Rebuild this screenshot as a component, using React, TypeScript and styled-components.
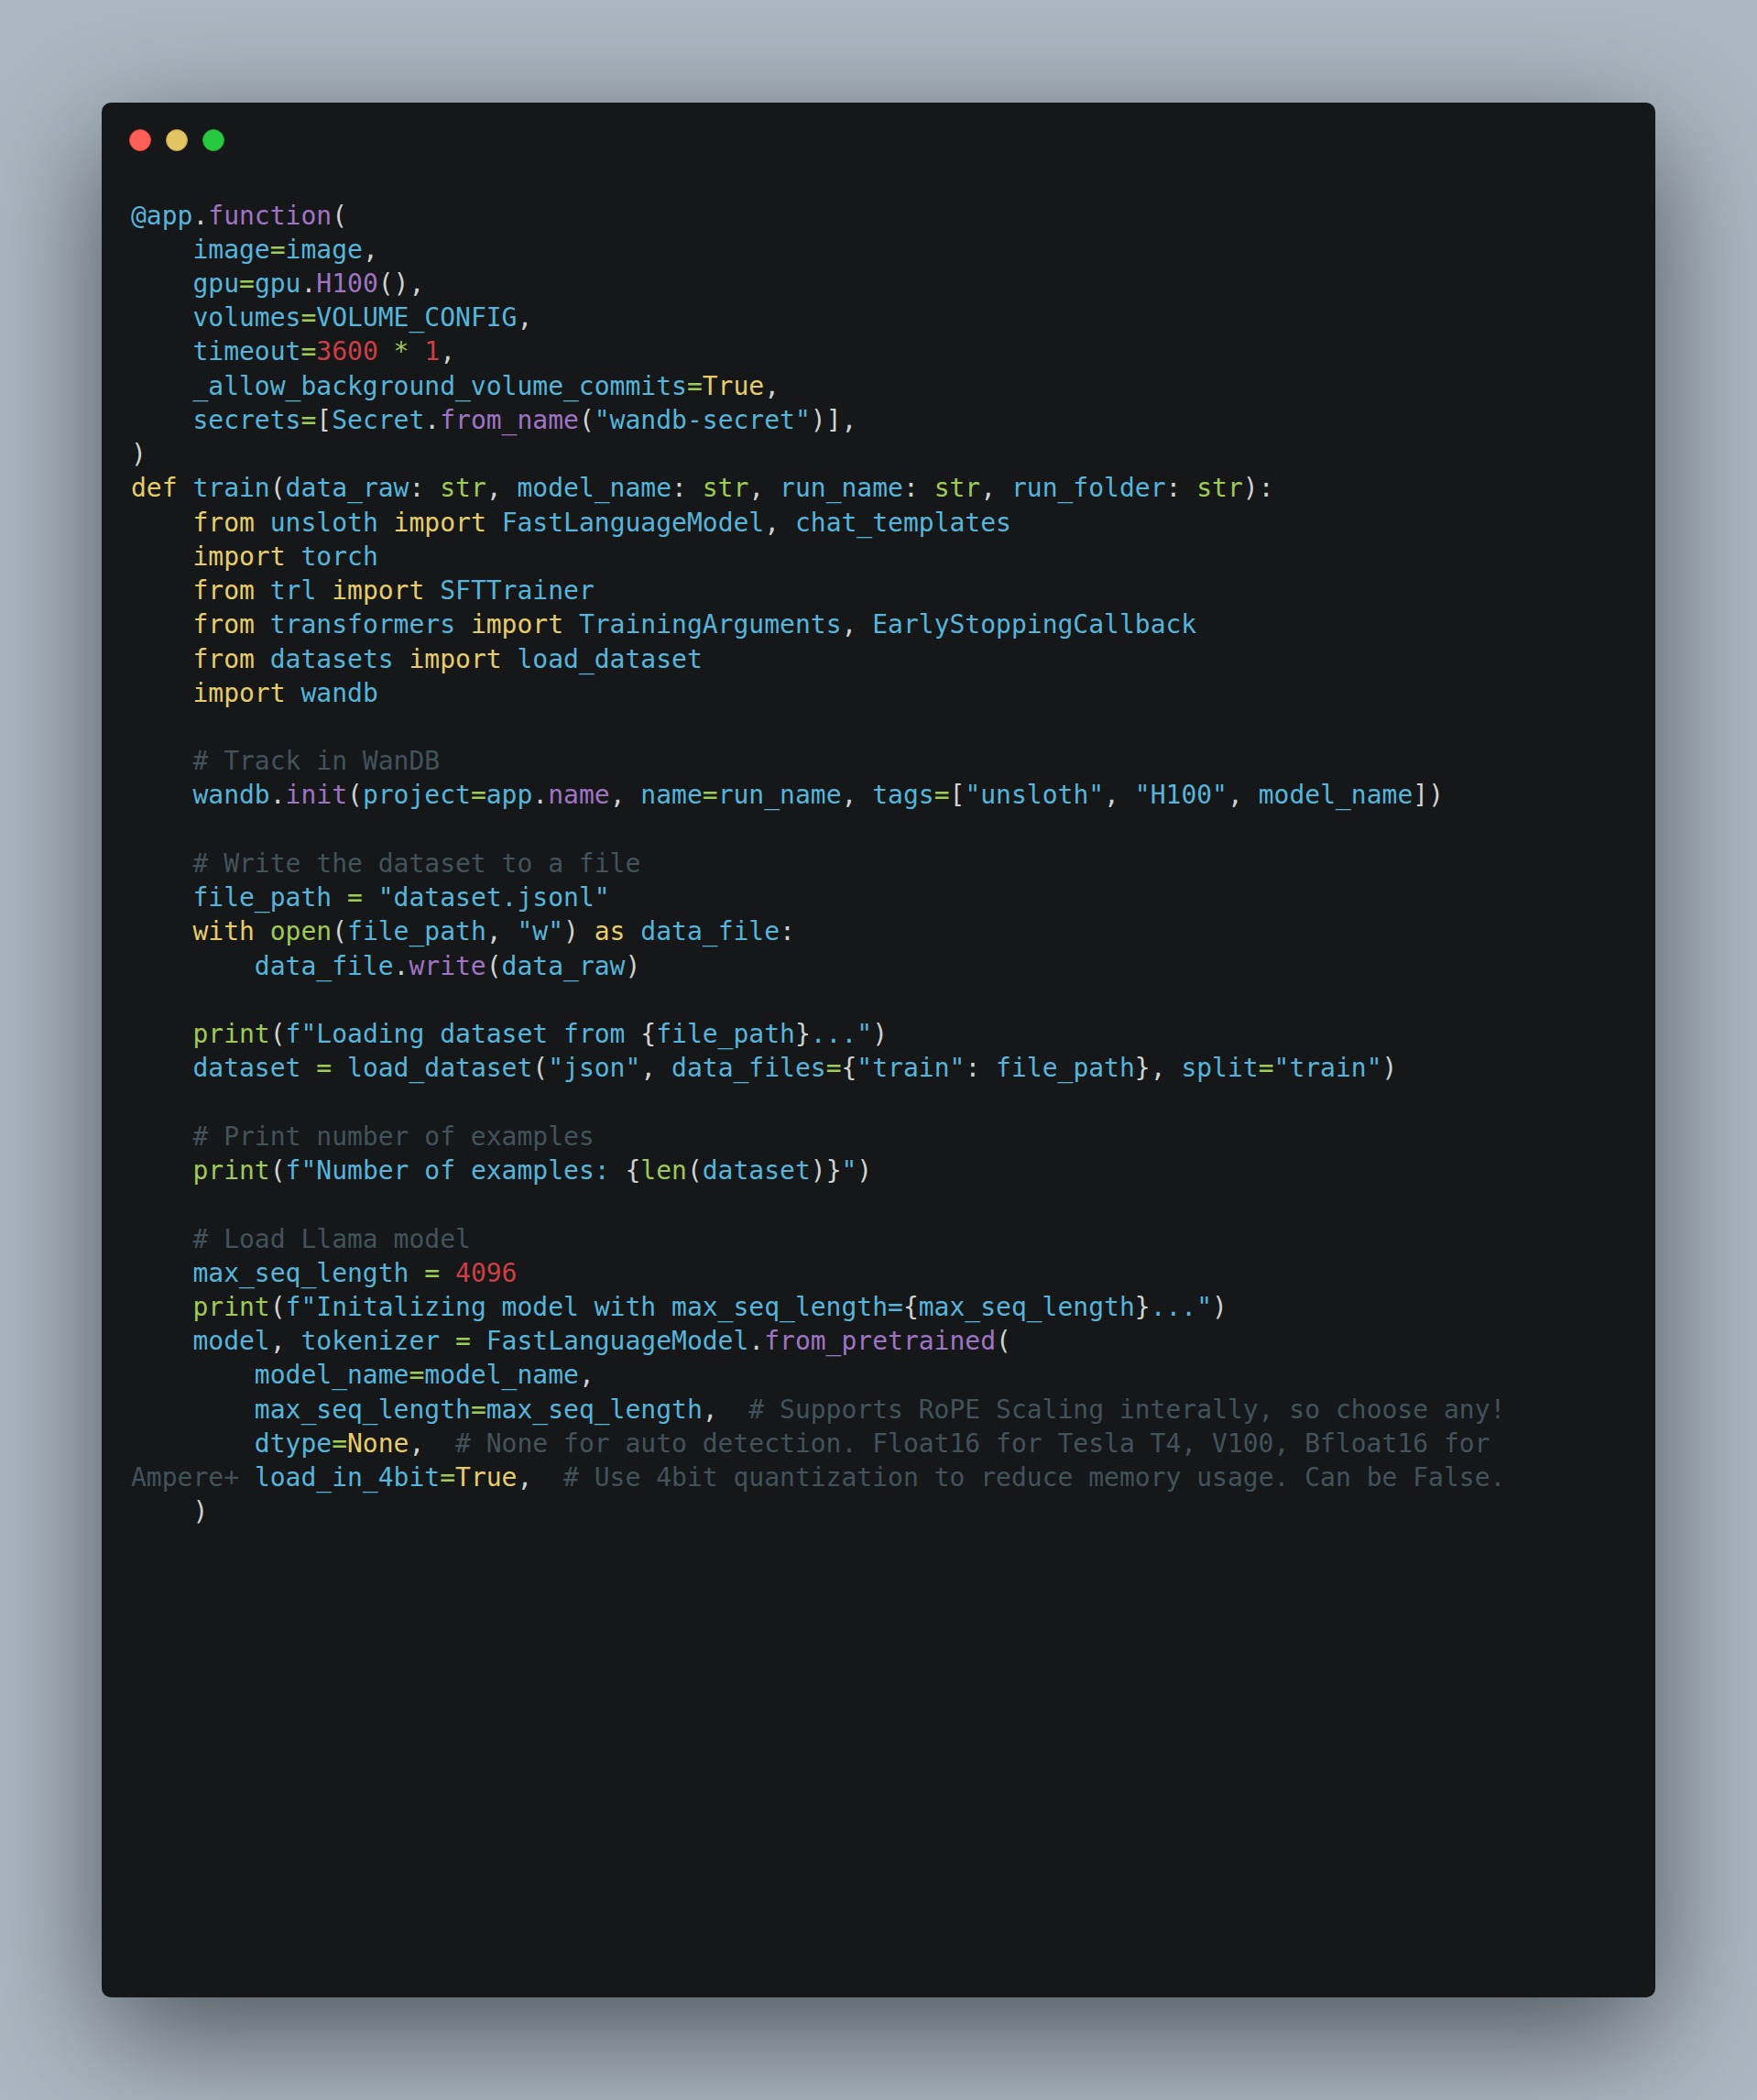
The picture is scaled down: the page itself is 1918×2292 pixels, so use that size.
import React from "react";
import styled, { createGlobalStyle } from "styled-components";

const GlobalStyle = createGlobalStyle`
  html, body {
    margin: 0;
    padding: 0;
    background: #abb8c3;
  }
  #root {
    width: 1918px;
    height: 2292px;
  }
`;

type Kind = "t" | "v" | "p" | "k" | "o" | "n" | "c";
type Tok = [Kind, string];

const colors: Record<Kind, string> = {
  t: "#cfd2d1",
  v: "#55b5db",
  p: "#a074c4",
  k: "#e6cd69",
  o: "#9fca56",
  n: "#cd3f45",
  c: "#41535b",
};

const Frame = styled.div`
  box-sizing: border-box;
  width: 1918px;
  height: 2292px;
  padding: 112px 111px;
  background: #abb8c3;
`;

const Window = styled.div`
  box-sizing: border-box;
  height: 2068px;
  background: #151718;
  border-radius: 10px;
  box-shadow: 0 40px 136px rgba(0, 0, 0, 0.55);
  padding: 29px 32px 32px 30px;
  display: flex;
  flex-direction: column;
`;

const Controls = styled.div`
  display: flex;
  gap: 16px;
  height: 24px;
`;

const Dot = styled.span<{ $fill: string; $stroke: string }>`
  box-sizing: border-box;
  width: 24px;
  height: 24px;
  border-radius: 50%;
  background: ${(p) => p.$fill};
  border: 1px solid ${(p) => p.$stroke};
`;

const Code = styled.pre`
  margin: 51.5px 0 0 2px;
  font-family: "DejaVu Sans Mono", "Liberation Mono", monospace;
  font-size: 28px;
  line-height: 37.24px;
  color: #cfd2d1;
  white-space: pre;
`;

const Line = styled.div`
  height: 37.24px;
`;

const Span = styled.span<{ $k: Kind }>`
  color: ${(p) => colors[p.$k]};
`;

const L = (...toks: Tok[]): Tok[] => toks;

const lines: Tok[][] = [
  L(["v", "@app"], ["t", "."], ["p", "function"], ["t", "("]),
  L(["t", "    "], ["v", "image"], ["o", "="], ["v", "image"], ["t", ","]),
  L(["t", "    "], ["v", "gpu"], ["o", "="], ["v", "gpu"], ["t", "."], ["p", "H100"], ["t", "(),"]),
  L(["t", "    "], ["v", "volumes"], ["o", "="], ["v", "VOLUME_CONFIG"], ["t", ","]),
  L(["t", "    "], ["v", "timeout"], ["o", "="], ["n", "3600"], ["t", " "], ["o", "*"], ["t", " "], ["n", "1"], ["t", ","]),
  L(["t", "    "], ["v", "_allow_background_volume_commits"], ["o", "="], ["k", "True"], ["t", ","]),
  L(
    ["t", "    "], ["v", "secrets"], ["o", "="], ["t", "["], ["v", "Secret"], ["t", "."], ["p", "from_name"],
    ["t", "("], ["v", "\"wandb-secret\""], ["t", ")],"]
  ),
  L(["t", ")"]),
  L(
    ["k", "def"], ["t", " "], ["v", "train"], ["t", "("], ["v", "data_raw"], ["t", ": "], ["o", "str"], ["t", ", "],
    ["v", "model_name"], ["t", ": "], ["o", "str"], ["t", ", "], ["v", "run_name"], ["t", ": "], ["o", "str"], ["t", ", "],
    ["v", "run_folder"], ["t", ": "], ["o", "str"], ["t", "):"]
  ),
  L(["t", "    "], ["k", "from"], ["t", " "], ["v", "unsloth"], ["t", " "], ["k", "import"], ["t", " "], ["v", "FastLanguageModel"], ["t", ", "], ["v", "chat_templates"]),
  L(["t", "    "], ["k", "import"], ["t", " "], ["v", "torch"]),
  L(["t", "    "], ["k", "from"], ["t", " "], ["v", "trl"], ["t", " "], ["k", "import"], ["t", " "], ["v", "SFTTrainer"]),
  L(["t", "    "], ["k", "from"], ["t", " "], ["v", "transformers"], ["t", " "], ["k", "import"], ["t", " "], ["v", "TrainingArguments"], ["t", ", "], ["v", "EarlyStoppingCallback"]),
  L(["t", "    "], ["k", "from"], ["t", " "], ["v", "datasets"], ["t", " "], ["k", "import"], ["t", " "], ["v", "load_dataset"]),
  L(["t", "    "], ["k", "import"], ["t", " "], ["v", "wandb"]),
  L(),
  L(["t", "    "], ["c", "# Track in WanDB"]),
  L(
    ["t", "    "], ["v", "wandb"], ["t", "."], ["p", "init"], ["t", "("], ["v", "project"], ["o", "="], ["v", "app"], ["t", "."],
    ["p", "name"], ["t", ", "], ["v", "name"], ["o", "="], ["v", "run_name"], ["t", ", "], ["v", "tags"], ["o", "="], ["t", "["],
    ["v", "\"unsloth\""], ["t", ", "], ["v", "\"H100\""], ["t", ", "], ["v", "model_name"], ["t", "])"]
  ),
  L(),
  L(["t", "    "], ["c", "# Write the dataset to a file"]),
  L(["t", "    "], ["v", "file_path"], ["t", " "], ["o", "="], ["t", " "], ["v", "\"dataset.jsonl\""]),
  L(
    ["t", "    "], ["k", "with"], ["t", " "], ["o", "open"], ["t", "("], ["v", "file_path"], ["t", ", "], ["v", "\"w\""],
    ["t", ") "], ["k", "as"], ["t", " "], ["v", "data_file"], ["t", ":"]
  ),
  L(["t", "        "], ["v", "data_file"], ["t", "."], ["p", "write"], ["t", "("], ["v", "data_raw"], ["t", ")"]),
  L(),
  L(
    ["t", "    "], ["o", "print"], ["t", "("], ["v", "f\"Loading dataset from "], ["t", "{"], ["v", "file_path"],
    ["t", "}"], ["v", "...\""], ["t", ")"]
  ),
  L(
    ["t", "    "], ["v", "dataset"], ["t", " "], ["o", "="], ["t", " "], ["v", "load_dataset"], ["t", "("], ["v", "\"json\""],
    ["t", ", "], ["v", "data_files"], ["o", "="], ["t", "{"], ["v", "\"train\""], ["t", ": "], ["v", "file_path"], ["t", "}, "],
    ["v", "split"], ["o", "="], ["v", "\"train\""], ["t", ")"]
  ),
  L(),
  L(["t", "    "], ["c", "# Print number of examples"]),
  L(
    ["t", "    "], ["o", "print"], ["t", "("], ["v", "f\"Number of examples: "], ["t", "{"], ["o", "len"], ["t", "("],
    ["v", "dataset"], ["t", ")}"], ["v", "\""], ["t", ")"]
  ),
  L(),
  L(["t", "    "], ["c", "# Load Llama model"]),
  L(["t", "    "], ["v", "max_seq_length"], ["t", " "], ["o", "="], ["t", " "], ["n", "4096"]),
  L(
    ["t", "    "], ["o", "print"], ["t", "("], ["v", "f\"Initalizing model with max_seq_length="], ["t", "{"],
    ["v", "max_seq_length"], ["t", "}"], ["v", "...\""], ["t", ")"]
  ),
  L(
    ["t", "    "], ["v", "model"], ["t", ", "], ["v", "tokenizer"], ["t", " "], ["o", "="], ["t", " "], ["v", "FastLanguageModel"],
    ["t", "."], ["p", "from_pretrained"], ["t", "("]
  ),
  L(["t", "        "], ["v", "model_name"], ["o", "="], ["v", "model_name"], ["t", ","]),
  L(
    ["t", "        "], ["v", "max_seq_length"], ["o", "="], ["v", "max_seq_length"], ["t", ",  "],
    ["c", "# Supports RoPE Scaling interally, so choose any!"]
  ),
  L(
    ["t", "        "], ["v", "dtype"], ["o", "="], ["k", "None"], ["t", ",  "],
    ["c", "# None for auto detection. Float16 for Tesla T4, V100, Bfloat16 for"]
  ),
  L(
    ["c", "Ampere+"], ["t", " "], ["v", "load_in_4bit"], ["o", "="], ["k", "True"], ["t", ",  "],
    ["c", "# Use 4bit quantization to reduce memory usage. Can be False."]
  ),
  L(["t", "    )"]),
];

export default function App() {
  return (
    <>
      <GlobalStyle />
      <Frame>
        <Window>
          <Controls>
            <Dot $fill="#ff5f56" $stroke="#d8463f" />
            <Dot $fill="#e2c462" $stroke="#b89c45" />
            <Dot $fill="#27c93f" $stroke="#1fa433" />
          </Controls>
          <Code>
            {lines.map((toks, i) => (
              <Line key={i}>
                {toks.map(([k, s], j) => (
                  <Span key={j} $k={k}>
                    {s}
                  </Span>
                ))}
              </Line>
            ))}
          </Code>
        </Window>
      </Frame>
    </>
  );
}
